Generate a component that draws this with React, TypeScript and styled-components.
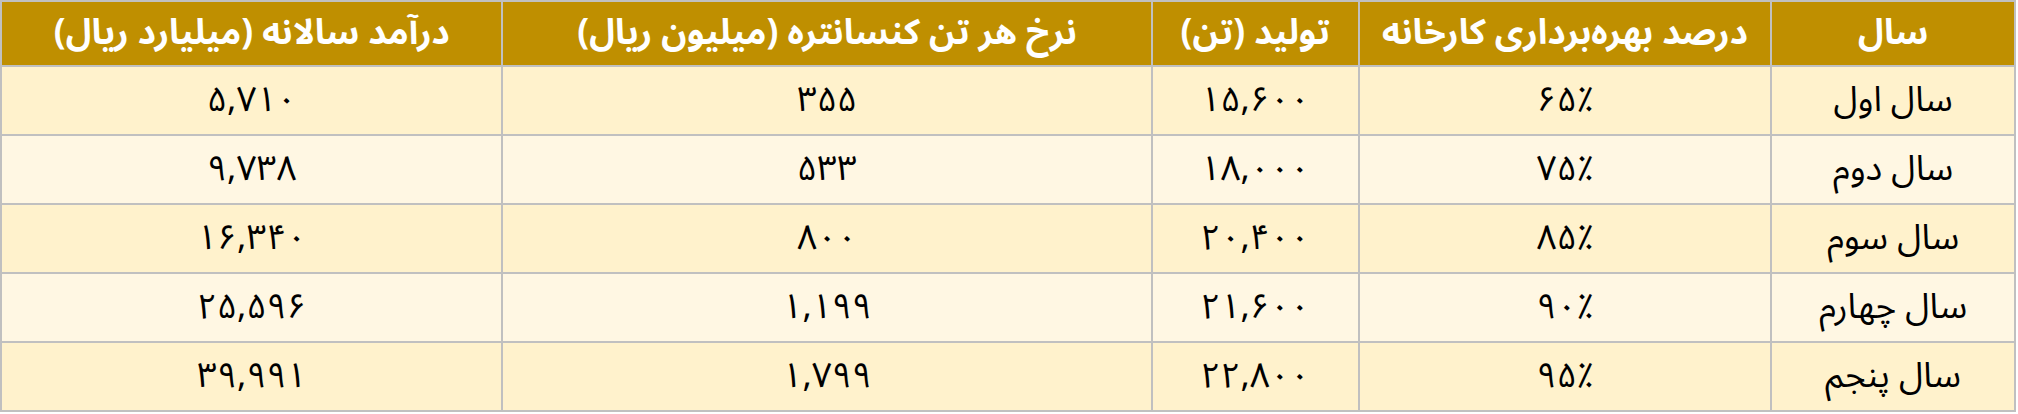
import styled, { createGlobalStyle } from "styled-components";

const GlobalStyle = createGlobalStyle`
  body {
    margin: 0;
    background: #ffffff;
    font-family: "Noto Sans Arabic", "Noto Sans Arabic UI", "DejaVu Sans", sans-serif;
  }
`;

const Table = styled.table`
  width: 2016px;
  border-collapse: collapse;
  direction: rtl;
  border: 2px solid #c0c0c0;
  font-family: "Noto Sans Arabic", "Noto Sans Arabic UI", "DejaVu Sans", sans-serif;
  line-height: 1.4;
`;

const Th = styled.th<{ $width: number }>`
  width: ${(p) => p.$width}px;
  height: 65px;
  padding: 0 8px;
  background-color: #bf8f00;
  color: #ffffff;
  font-size: 35px;
  font-weight: bold;
  text-align: center;
  border: 2px solid #c0c0c0;
  box-sizing: border-box;
`;

const Row = styled.tr<{ $light: boolean }>`
  background-color: ${(p) => (p.$light ? "#fff7e3" : "#fff2cc")};
`;

const Td = styled.td`
  height: 67px;
  padding: 0 8px;
  color: #000000;
  font-size: 35px;
  text-align: center;
  border: 2px solid #c0c0c0;
`;

const columns = [
  { title: "سال", width: 244 },
  { title: "درصد بهره‌برداری کارخانه", width: 413 },
  { title: "تولید (تن)", width: 207 },
  { title: "نرخ هر تن کنسانتره (میلیون ریال)", width: 650 },
  { title: "درآمد سالانه (میلیارد ریال)", width: 502 },
];

const rows = [
  ["سال اول", "۶۵٪", "۱۵,۶۰۰", "۳۵۵", "۵,۷۱۰"],
  ["سال دوم", "۷۵٪", "۱۸,۰۰۰", "۵۳۳", "۹,۷۳۸"],
  ["سال سوم", "۸۵٪", "۲۰,۴۰۰", "۸۰۰", "۱۶,۳۴۰"],
  ["سال چهارم", "۹۰٪", "۲۱,۶۰۰", "۱,۱۹۹", "۲۵,۵۹۶"],
  ["سال پنجم", "۹۵٪", "۲۲,۸۰۰", "۱,۷۹۹", "۳۹,۹۹۱"],
];

const App = () => {
  return (
    <>
      <GlobalStyle />
      <Table>
        <thead>
          <tr>
            {columns.map((c) => (
              <Th key={c.title} $width={c.width}>
                {c.title}
              </Th>
            ))}
          </tr>
        </thead>
        <tbody>
          {rows.map((r, i) => (
            <Row key={r[0]} $light={i % 2 === 1}>
              {r.map((cell, j) => (
                <Td key={j}>{cell}</Td>
              ))}
            </Row>
          ))}
        </tbody>
      </Table>
    </>
  );
};

export default App;
